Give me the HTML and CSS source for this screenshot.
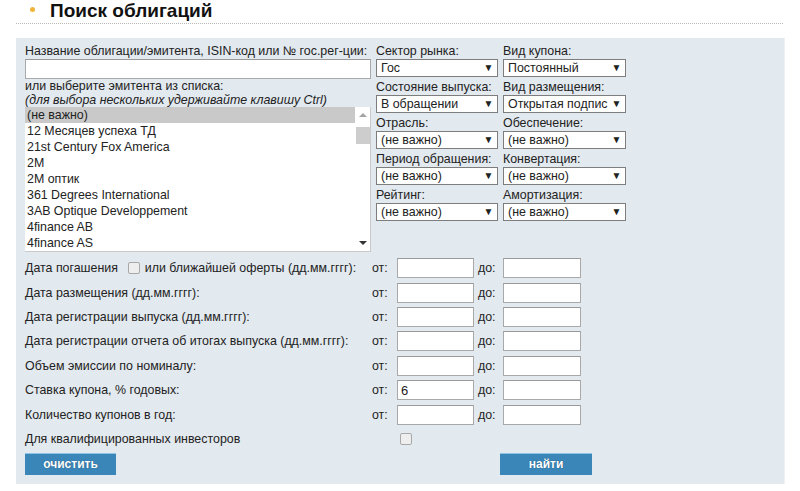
FILE: index.html
```html
<!DOCTYPE html>
<html lang="ru">
<head>
    <meta charset="UTF-8">
    <title>Поиск облигаций</title>
    <link rel="stylesheet" href="styles.css">
</head>
<body>
    <div class="page">
        <h1 class="title"><span class="dot"></span>Поиск облигаций</h1>

        <form class="search">
            <div class="top">
                <div class="issuer">
                    <div class="lbl">Название облигации/эмитента, ISIN-код или № гос.рег-ции:</div>
                    <div class="text wide"></div>
                    <div class="lbl hint">или выберите эмитента из списка:</div>
                    <div class="lbl note">(для выбора нескольких удерживайте клавишу Ctrl)</div>

                    <div class="listbox">
                        <ul class="items">
                            <li class="sel">(не важно)</li>
                            <li>12 Месяцев успеха ТД</li>
                            <li>21st Century Fox America</li>
                            <li>2M</li>
                            <li>2M оптик</li>
                            <li>361 Degrees International</li>
                            <li>3AB Optique Developpement</li>
                            <li>4finance AB</li>
                            <li>4finance AS</li>
                        </ul>
                        <div class="scroll">
                            <span class="arrow up"></span>
                            <span class="thumb"></span>
                            <span class="arrow down"></span>
                        </div>
                    </div>
                </div>

                <div class="filters">
                    <div class="field"><div class="lbl">Сектор рынка:</div><div class="select">Гос</div></div>
                    <div class="field"><div class="lbl">Вид купона:</div><div class="select">Постоянный</div></div>
                    <div class="field"><div class="lbl">Состояние выпуска:</div><div class="select">В обращении</div></div>
                    <div class="field"><div class="lbl">Вид размещения:</div><div class="select">Открытая подпис</div></div>
                    <div class="field"><div class="lbl">Отрасль:</div><div class="select">(не важно)</div></div>
                    <div class="field"><div class="lbl">Обеспечение:</div><div class="select">(не важно)</div></div>
                    <div class="field"><div class="lbl">Период обращения:</div><div class="select">(не важно)</div></div>
                    <div class="field"><div class="lbl">Конвертация:</div><div class="select">(не важно)</div></div>
                    <div class="field"><div class="lbl">Рейтинг:</div><div class="select">(не важно)</div></div>
                    <div class="field"><div class="lbl">Амортизация:</div><div class="select">(не важно)</div></div>
                </div>
            </div>

            <div class="ranges">
                <div class="name">Дата погашения <span class="check inline"></span> или ближайшей оферты (дд.мм.гггг):</div>
                <div class="from">от:</div><div class="text"></div><div class="to">до:</div><div class="text"></div>

                <div class="name">Дата размещения (дд.мм.гггг):</div>
                <div class="from">от:</div><div class="text"></div><div class="to">до:</div><div class="text"></div>

                <div class="name">Дата регистрации выпуска (дд.мм.гггг):</div>
                <div class="from">от:</div><div class="text"></div><div class="to">до:</div><div class="text"></div>

                <div class="name">Дата регистрации отчета об итогах выпуска (дд.мм.гггг):</div>
                <div class="from">от:</div><div class="text"></div><div class="to">до:</div><div class="text"></div>

                <div class="name">Объем эмиссии по номиналу:</div>
                <div class="from">от:</div><div class="text"></div><div class="to">до:</div><div class="text"></div>

                <div class="name">Ставка купона, % годовых:</div>
                <div class="from">от:</div><div class="text">6</div><div class="to">до:</div><div class="text"></div>

                <div class="name">Количество купонов в год:</div>
                <div class="from">от:</div><div class="text"></div><div class="to">до:</div><div class="text"></div>

                <div class="name">Для квалифицированных инвесторов</div>
                <div></div><div class="cell"><span class="check"></span></div><div></div><div></div>
            </div>

            <div class="actions">
                <span class="btn">очистить</span>
                <span class="btn find">найти</span>
            </div>
        </form>
    </div>
</body>
</html>
```

FILE: styles.css
```css
body {
    margin: 0;
    font-family: "Liberation Sans", Arial, sans-serif;
    font-size: 12.4px;
    color: #222;
    background: #fff;
}

.page { width: 800px; height: 491px; overflow: hidden; }

/* Заголовок */
.title {
    display: flex;
    align-items: center;
    margin: 0 17px 0 16px;
    height: 21px;
    padding-bottom: 2px;
    font-size: 19px;
    font-weight: bold;
    color: #111;
    border-bottom: 1px dotted #b8b8b8;
}

.title .dot {
    width: 5px;
    height: 5px;
    border-radius: 50%;
    background: #f0b43a;
    margin: 0 15px 3px 14px;
}

/* Панель поиска */
.search {
    margin: 14px 15px 0 16px;
    padding: 6px 9px 9px 9px;
    background: #e2e9ef;
    border-right: 1px solid #eef2f5;
}

.lbl { line-height: 14px; color: #222; }

.top { display: flex; }

.issuer { width: 346px; }

.text {
    box-sizing: border-box;
    height: 20px;
    background: #fff;
    border: 1px solid #a9a9a9;
    border-top-color: #9a9a9a;
    padding: 2px 3px;
    font-size: 13px;
    line-height: 15px;
}

.text.wide { margin: 1px 0 0; }

.note { font-style: italic; }

/* Список эмитентов */
.listbox {
    display: flex;
    height: 144px;
    background: #fff;
    border-right: 1px solid #c9c9c9;
    border-bottom: 1px solid #c9c9c9;
}

.items {
    flex: 1;
    margin: 0;
    padding: 0;
    list-style: none;
}

.items li { height: 16px; line-height: 16px; padding-left: 2px; }
.items li.sel { background: #c9c9c9; }

.scroll {
    position: relative;
    width: 15px;
    background: #fff;
}

.scroll .thumb {
    position: absolute;
    top: 20px;
    left: 1px;
    width: 14px;
    height: 17px;
    background: #cdcdcd;
}

.scroll .arrow {
    position: absolute;
    left: 4px;
    width: 0;
    height: 0;
    border-left: 4px solid transparent;
    border-right: 4px solid transparent;
}

.scroll .up { top: 6px; border-bottom: 4px solid #a3a3a3; }
.scroll .down { bottom: 6px; border-top: 4px solid #333; }

/* Фильтры */
.filters {
    display: grid;
    grid-template-columns: 122px 123px;
    column-gap: 5px;
    row-gap: 3px;
    margin-left: 5px;
    align-content: start;
}

.field .lbl { margin-bottom: 1px; }

.select {
    position: relative;
    box-sizing: border-box;
    height: 18px;
    line-height: 16px;
    padding-left: 4px;
    background: #fff;
    border: 1px solid #7d7d7d;
    white-space: nowrap;
    overflow: hidden;
}

.select::after {
    content: "▼";
    position: absolute;
    right: 0;
    top: 0;
    width: 17px;
    text-align: center;
    font-size: 10px;
    background: #fff;
}

/* Диапазоны */
.ranges {
    display: grid;
    grid-template-columns: 346px 26px 77px 29px 78px;
    grid-auto-rows: 24.4px;
    align-items: center;
    margin-top: 4px;
}

.from { padding-left: 1px; }
.to { padding-left: 4px; }

.check {
    display: inline-block;
    box-sizing: border-box;
    width: 12px;
    height: 12px;
    border: 1px solid #a8a8a8;
    border-radius: 2px;
    background: #eee;
    vertical-align: -2px;
    margin-left: 3px;
}

.check.inline { margin: 0 1px 0 7px; }

/* Кнопки */
.actions {
    display: flex;
    margin-top: 2px;
}

.btn {
    box-sizing: border-box;
    width: 91px;
    height: 22px;
    line-height: 21px;
    text-align: center;
    color: #fff;
    font-size: 12px;
    font-weight: bold;
    background: #3b86b8;
    border-top: 1px solid #8cc6e6;
    text-shadow: 0 0 1px #1d4d70;
}

.btn.find { margin-left: 384px; width: 92px; }
```
